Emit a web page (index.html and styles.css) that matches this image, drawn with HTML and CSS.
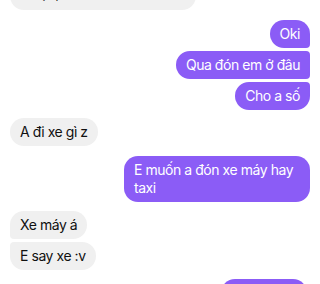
FILE: index.html
```html
<!DOCTYPE html>
<html lang="vi">
<head>
<meta charset="utf-8">
<link rel="stylesheet" href="styles.css">
</head>
<body>
<div class="chat">
  <div class="msg them first">Tối nay em tan ca hơi muộn, chắc về trễ nha</div>
  <div class="group me gap-lg">
    <div class="msg me top">Oki</div>
    <div class="msg me mid">Qua đón em ở đâu</div>
    <div class="msg me bottom">Cho a số</div>
  </div>
  <div class="group them gap-md">
    <div class="msg them">A đi xe gì z</div>
  </div>
  <div class="group me gap-lg">
    <div class="msg me">E muốn a đón xe máy hay taxi</div>
  </div>
  <div class="group them gap-sm">
    <div class="msg them top">Xe máy á</div>
    <div class="msg them bottom">E say xe :v</div>
  </div>
  <div class="group me gap-sm">
    <div class="msg me last">Ừ a biết rồi</div>
  </div>
</div>
</body>
</html>
```
FILE: styles.css
```css
html, body {
  margin: 0;
  padding: 0;
  background: #ffffff;
  width: 320px;
  height: 284px;
  overflow: hidden;
}
.chat {
  display: flex;
  flex-direction: column;
  padding: 0 10px;
  margin-top: -39px;
  font-family: Inter, "Noto Sans", sans-serif;
  font-size: 14px;
  letter-spacing: -0.45px;
  line-height: 18px;
}
.group {
  display: flex;
  flex-direction: column;
  gap: 3px;
}
.group.me { align-items: flex-end; }
.group.them { align-items: flex-start; }
.gap-lg { margin-top: 10px; }
.gap-md { margin-top: 8px; }
.gap-sm { margin-top: 9px; }
.msg {
  box-sizing: border-box;
  max-width: 186px;
  padding: 5px 10px;
  border-radius: 14px;
}
.msg.first {
  align-self: flex-start;
  width: 186px;
  padding-bottom: 8px;
}
.msg.me {
  background: #8b5cf6;
  color: #ffffff;
}
.msg.them {
  background: #f0f0f0;
  color: #111111;
}
.msg.last { margin-right: 3px; }
.msg.me.top { border-bottom-right-radius: 4px; }
.msg.me.mid { border-top-right-radius: 4px; border-bottom-right-radius: 4px; }
.msg.me.bottom { border-top-right-radius: 4px; }
.msg.them.top { border-bottom-left-radius: 4px; }
.msg.them.bottom { border-top-left-radius: 4px; }
```
